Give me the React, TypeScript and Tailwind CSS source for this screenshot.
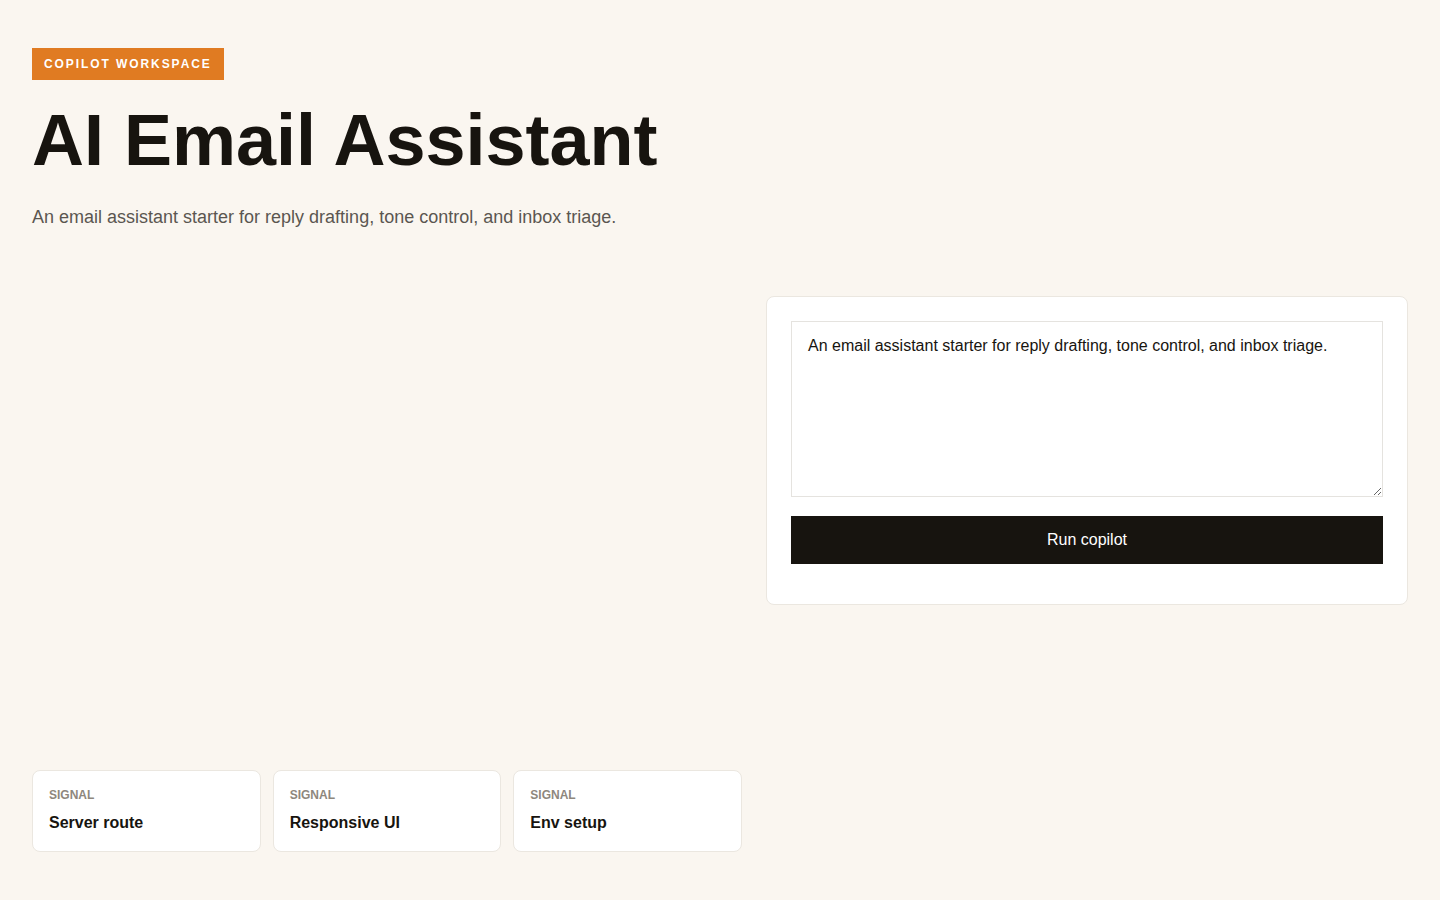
const signals = ["Server route", "Responsive UI", "Env setup"]

export default function App() {
  const intro = "An email assistant starter for reply drafting, tone control, and inbox triage."

  return (
    <main className="min-h-screen bg-[#faf6f0] px-8 pt-12 pb-12 font-['Liberation_Sans',Arial,sans-serif] text-[#17140f]">
      <header>
        <span className="inline-flex h-8 items-center bg-[#e07b22] px-3 text-xs font-bold tracking-[0.16em] text-white">
          COPILOT WORKSPACE
        </span>
        <h1 className="mt-6 text-[72px] leading-none font-bold">AI Email Assistant</h1>
        <p className="mt-[27px] text-lg leading-7 text-[#5b5650]">{intro}</p>
      </header>

      <section className="mt-[65px] grid min-h-[556px] grid-cols-[710px_1fr] gap-6">
        {/* left side: signals sit at the bottom */}
        <div className="flex flex-col justify-end">
          <div className="grid grid-cols-3 gap-3">
            {signals.map((s) => (
              <div key={s} className="rounded-lg border border-[#ebe7e0] bg-white p-4">
                <div className="text-xs leading-4 font-semibold text-[#8e877d]">SIGNAL</div>
                <div className="mt-2 text-base leading-6 font-bold">{s}</div>
              </div>
            ))}
          </div>
        </div>

        <div className="self-start rounded-lg border border-[#ebe7e0] bg-white p-6 pb-10">
          <div className="flex flex-col gap-[19px]">
            <textarea
              defaultValue={intro}
              className="block h-[176px] w-full resize-y border border-[#e5e3df] bg-white px-4 pt-3 pb-4 text-base leading-6 text-[#17140f] outline-none"
            />
            <button className="h-12 w-full bg-[#17140f] text-base text-white">Run copilot</button>
          </div>
        </div>
      </section>
    </main>
  )
}
